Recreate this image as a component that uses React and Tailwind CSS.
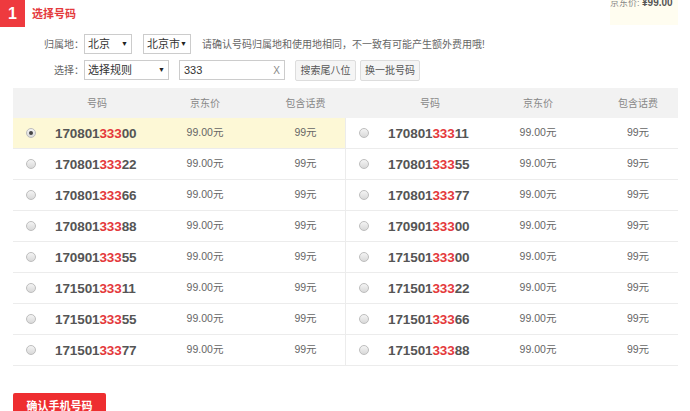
import React from 'react';

const LEFT = ['17080133300', '17080133322', '17080133366', '17080133388', '17090133355', '17150133311', '17150133355', '17150133377'];
const RIGHT = ['17080133311', '17080133355', '17080133377', '17090133300', '17150133300', '17150133322', '17150133366', '17150133388'];

function Radio({ checked }) {
  return (
    <span className="flex h-[10px] w-[10px] items-center justify-center rounded-full border border-[#bdbdbd] bg-gradient-to-b from-[#f4f4f4] to-[#d9d9d9]">
      {checked && <span className="h-[4px] w-[4px] rounded-full bg-[#444]" />}
    </span>
  );
}

function Numero({ n }) {
  return (
    <span className="font-['Liberation_Sans',Arial,sans-serif] text-[13.5px] font-bold tracking-[-0.1px] text-[#555]">
      {n.slice(0, 6)}
      <span className="text-[#e4393c]">{n.slice(6, 9)}</span>
      {n.slice(9)}
    </span>
  );
}

function Celda({ n, checked, last }) {
  return (
    <div className={`grid h-full items-center ${last ? 'grid-cols-[36px_96px_120px_80px] w-[332px]' : 'grid-cols-[36px_96px_120px_81px] w-[333px] border-r border-[#ececec]'} ${checked ? 'bg-[#fdf8d6]' : ''}`}>
      <div className="flex justify-center"><Radio checked={checked} /></div>
      <div className="pl-[6px]"><Numero n={n} /></div>
      <div className="text-center text-[10.5px] text-[#666]">99.00元</div>
      <div className="text-center text-[10.5px] text-[#666]">99元</div>
    </div>
  );
}

function Cabecera({ last }) {
  return (
    <div className={`grid items-center text-center text-[10px] text-[#888] ${last ? 'grid-cols-[36px_96px_120px_80px] w-[332px]' : 'grid-cols-[36px_96px_120px_81px] w-[333px]'}`}>
      <div />
      <div>号码</div>
      <div>京东价</div>
      <div>包含话费</div>
    </div>
  );
}

function Select({ w, texto }) {
  return (
    <div className={`flex h-[20px] items-center justify-between whitespace-nowrap border border-[#ccc] bg-white pl-[3px] pr-[3px] text-[11px] text-[#333] ${w}`}>
      <span>{texto}</span>
      <span className="text-[7px] text-[#222]">▼</span>
    </div>
  );
}

export default function App() {
  return (
    <div className="h-[411px] w-[690px] overflow-hidden bg-white font-['Liberation_Sans','Noto_Sans_CJK_SC',sans-serif]">
      <div className="flex items-start">
        <div className="flex h-[27px] w-[25px] items-center justify-center bg-[#ee3a3e] text-[16px] font-bold text-white">1</div>
        <div className="ml-[7px] mt-[6px] text-[11px] font-bold text-[#e4393c]">选择号码</div>
        <div className="ml-auto mr-[12px] h-[25px] w-[68px] overflow-hidden bg-[#fffdf0] text-[9px] text-[#888]">
          <div className="-mt-[5px] whitespace-nowrap">京东价: <span className="text-[10px] font-bold text-[#555]">¥99.00</span></div>
        </div>
      </div>

      <div className="mt-[7px] flex h-[20px] items-center text-[10px] text-[#666]">
        <div className="w-[84px] text-right">归属地：</div>
        <Select w="w-[48px]" texto="北京" />
        <div className="ml-[11px]"><Select w="w-[48px]" texto="北京市" /></div>
        <div className="ml-[11px]">请确认号码归属地和使用地相同，不一致有可能产生额外费用哦!</div>
      </div>

      <div className="mt-[6px] flex h-[20px] items-center text-[10px] text-[#666]">
        <div className="w-[84px] text-right">选择：</div>
        <Select w="w-[85px]" texto="选择规则" />
        <div className="ml-[10px] flex h-[20px] w-[106px] items-center justify-between border border-[#ccc] px-[4px] text-[11px] text-[#333]">
          <span>333</span>
          <span className="text-[10px] text-[#888]">X</span>
        </div>
        <div className="ml-[10px] flex h-[21px] w-[61px] items-center justify-center rounded-[2px] border border-[#ddd] bg-[#f5f5f5] text-[10px] text-[#555]">搜索尾八位</div>
        <div className="ml-[4px] flex h-[21px] w-[60px] items-center justify-center rounded-[2px] border border-[#ddd] bg-[#f5f5f5] text-[10px] text-[#555]">换一批号码</div>
      </div>

      <div className="ml-[13px] mt-[8px] w-[665px]">
        <div className="flex h-[30px] bg-[#f2f2f2]">
          <Cabecera />
          <Cabecera last />
        </div>
        {LEFT.map((n, i) => (
          <div key={n} className="flex h-[31px] border-b border-[#ececec]">
            <Celda n={n} checked={i === 0} />
            <Celda n={RIGHT[i]} last />
          </div>
        ))}
      </div>

      <div className="ml-[13px] mt-[27px] flex h-[26px] w-[93px] items-center justify-center rounded-[2px] bg-[#ee2e30] text-[11px] font-bold text-white">确认手机号码</div>
    </div>
  );
}
